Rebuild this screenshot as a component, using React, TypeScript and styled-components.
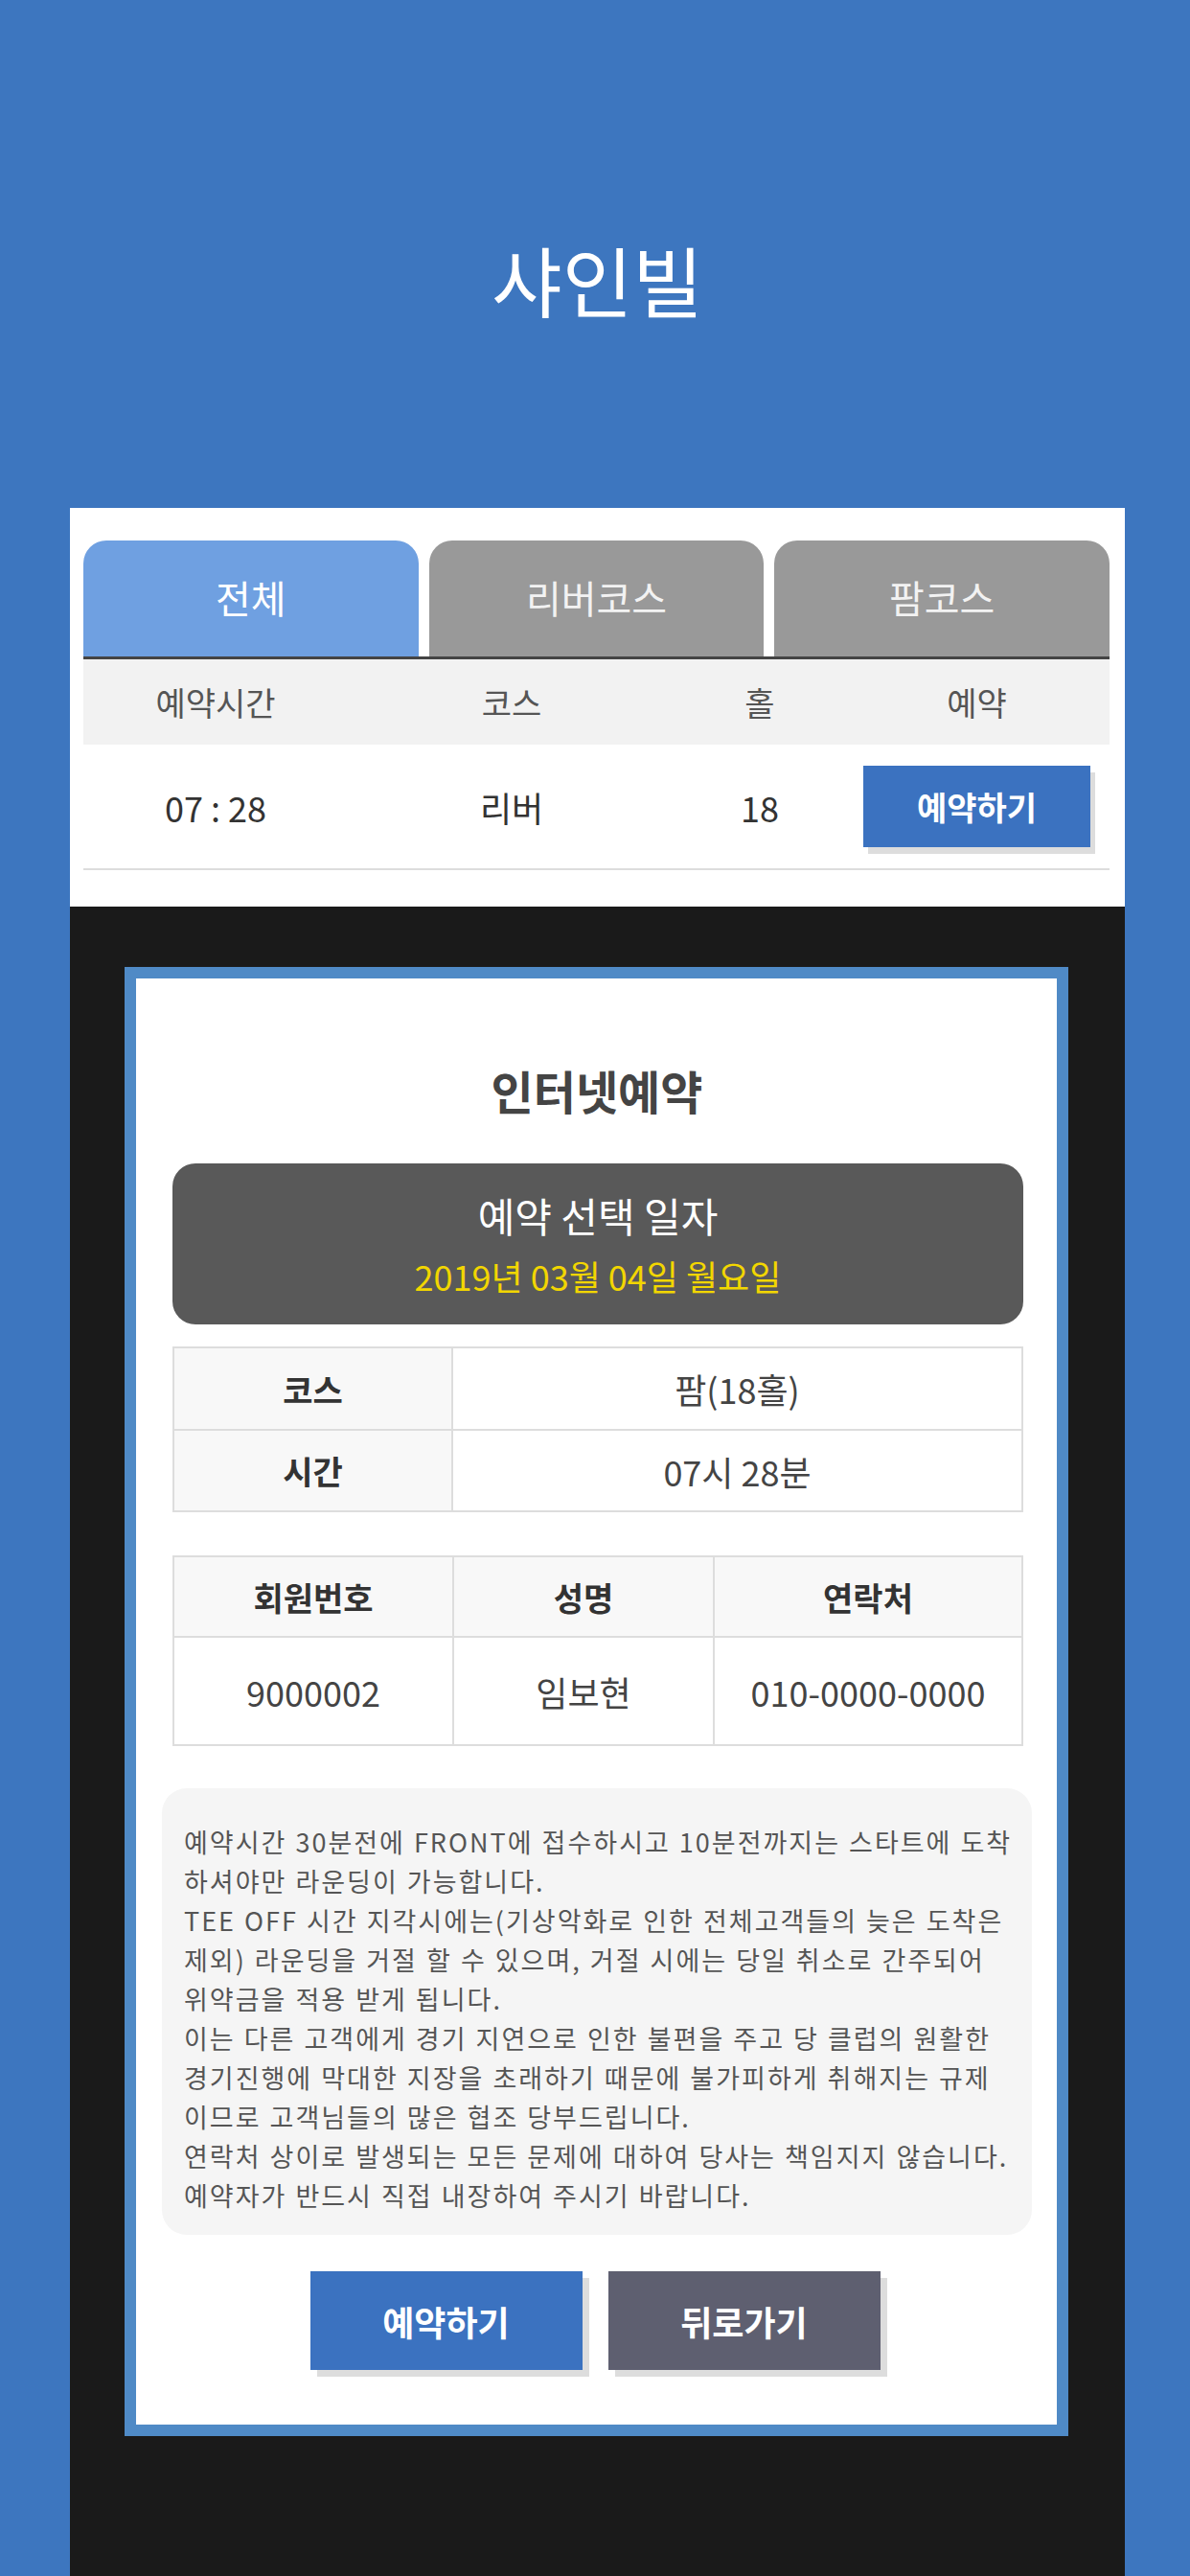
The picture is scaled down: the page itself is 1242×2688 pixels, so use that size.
import styled, { createGlobalStyle } from "styled-components";

const GlobalStyle = createGlobalStyle`
  html, body {
    margin: 0;
    padding: 0;
    background: #3d76bf;
  }
  body {
    font-family: "Noto Sans CJK KR", "Noto Sans", sans-serif;
  }
  * {
    box-sizing: border-box;
  }
`;

const Page = styled.div`
  min-height: 2688px;
  padding: 0 68px 0 73px;
  display: flex;
  flex-direction: column;
`;

const Header = styled.header`
  height: 530px;
  padding-top: 240px;
  text-align: center;
`;

const SiteTitle = styled.h1`
  margin: 0;
  color: #ffffff;
  font-size: 80px;
  font-weight: 400;
  line-height: 100px;
`;

const Panel = styled.section`
  background: #ffffff;
  padding: 34px 16px 38px 14px;
`;

const Tabs = styled.div`
  display: flex;
  gap: 11px;
  border-bottom: 3px solid #444444;
`;

const Tab = styled.div<{ $active?: boolean }>`
  flex: 1;
  height: 121px;
  border-radius: 24px 24px 0 0;
  background: ${(p) => (p.$active ? "#6fa0e1" : "#999999")};
  color: ${(p) => (p.$active ? "#ffffff" : "#f2f2f2")};
  font-size: 40px;
  display: flex;
  align-items: center;
  justify-content: center;
  padding-bottom: 4px;
`;

const Row = styled.div<{ $head?: boolean }>`
  display: grid;
  grid-template-columns: 276px 342px 176px 1fr;
  align-items: center;
  height: ${(p) => (p.$head ? "89px" : "131px")};
  background: ${(p) => (p.$head ? "#f2f2f2" : "#ffffff")};
  border-bottom: ${(p) => (p.$head ? "none" : "2px solid #dddddd")};
  color: ${(p) => (p.$head ? "#555555" : "#333333")};
  font-size: ${(p) => (p.$head ? "34px" : "36px")};
`;

const Cell = styled.div`
  text-align: center;
`;

const SmallButton = styled.button`
  width: 237px;
  height: 85px;
  margin: 0 auto;
  display: block;
  border: none;
  background: #3b72c0;
  color: #ffffff;
  font-family: inherit;
  font-size: 34px;
  font-weight: 700;
  box-shadow: 5px 7px 0 #dddddd;
`;

const Overlay = styled.div`
  flex: 1;
  background: #1a1a1a;
  padding: 63px 59px 148px 57px;
`;

const Modal = styled.div`
  border: 12px solid #4f8ac6;
  background: #ffffff;
  padding: 86px 26px 57px 27px;
`;

const ModalTitle = styled.h2`
  margin: 0 0 47px;
  text-align: center;
  color: #444444;
  font-size: 48px;
  font-weight: 700;
  line-height: 60px;
`;

const DateBox = styled.div`
  margin: 0 9px 0 11px;
  height: 168px;
  border-radius: 24px;
  background: #595959;
  padding-top: 26px;
  text-align: center;
`;

const DateLabel = styled.div`
  color: #ffffff;
  font-size: 42px;
  line-height: 56px;
`;

const DateValue = styled.div`
  margin-top: 11px;
  color: #f2d600;
  font-size: 36px;
  line-height: 48px;
`;

const InfoGrid = styled.div<{ $cols: string; $rows: string; $top: number }>`
  margin: ${(p) => p.$top}px 9px 0 11px;
  display: grid;
  grid-template-columns: ${(p) => p.$cols};
  grid-template-rows: ${(p) => p.$rows};
  border-top: 2px solid #dddddd;
  border-left: 2px solid #dddddd;
`;

const InfoCell = styled.div<{ $label?: boolean }>`
  display: flex;
  align-items: center;
  justify-content: center;
  border-right: 2px solid #dddddd;
  border-bottom: 2px solid #dddddd;
  background: ${(p) => (p.$label ? "#f8f8f8" : "#ffffff")};
  color: ${(p) => (p.$label ? "#333333" : "#444444")};
  font-size: ${(p) => (p.$label ? "34px" : "36px")};
  font-weight: ${(p) => (p.$label ? 700 : 400)};
`;

const Notice = styled.div`
  margin-top: 44px;
  height: 466px;
  border-radius: 26px;
  background: #f5f5f5;
  padding: 35px 12px 21px 23px;
  color: #555555;
  font-size: 27px;
  line-height: 41px;
  letter-spacing: 2px;
  word-spacing: 1px;
`;

const NoticeLine = styled.div`
  white-space: nowrap;
`;

const Actions = styled.div`
  margin-top: 38px;
  display: flex;
  justify-content: center;
  gap: 27px;
  padding-right: 4px;
`;

const ActionButton = styled.button<{ $tone: "primary" | "back" }>`
  width: 284px;
  height: 103px;
  border: none;
  background: ${(p) => (p.$tone === "primary" ? "#3b72c0" : "#5e5f70")};
  color: #ffffff;
  font-family: inherit;
  font-size: 36px;
  font-weight: 700;
  box-shadow: 7px 7px 0 #dddddd;
`;

const noticeLines = [
  "예약시간 30분전에 FRONT에 접수하시고 10분전까지는 스타트에 도착",
  "하셔야만 라운딩이 가능합니다.",
  "TEE OFF 시간 지각시에는(기상악화로 인한 전체고객들의 늦은 도착은",
  "제외) 라운딩을 거절 할 수 있으며, 거절 시에는 당일 취소로 간주되어",
  "위약금을 적용 받게 됩니다.",
  "이는 다른 고객에게 경기 지연으로 인한 불편을 주고 당 클럽의 원활한",
  "경기진행에 막대한 지장을 초래하기 때문에 불가피하게 취해지는 규제",
  "이므로 고객님들의 많은 협조 당부드립니다.",
  "연락처 상이로 발생되는 모든 문제에 대하여 당사는 책임지지 않습니다.",
  "예약자가 반드시 직접 내장하여 주시기 바랍니다.",
];

const App = () => {
  return (
    <>
      <GlobalStyle />
      <Page>
        <Header>
          <SiteTitle>샤인빌</SiteTitle>
        </Header>
        <Panel>
          <Tabs>
            <Tab $active>전체</Tab>
            <Tab>리버코스</Tab>
            <Tab>팜코스</Tab>
          </Tabs>
          <Row $head>
            <Cell>예약시간</Cell>
            <Cell>코스</Cell>
            <Cell>홀</Cell>
            <Cell>예약</Cell>
          </Row>
          <Row>
            <Cell>07 : 28</Cell>
            <Cell>리버</Cell>
            <Cell>18</Cell>
            <Cell>
              <SmallButton>예약하기</SmallButton>
            </Cell>
          </Row>
        </Panel>
        <Overlay>
          <Modal>
            <ModalTitle>인터넷예약</ModalTitle>
            <DateBox>
              <DateLabel>예약 선택 일자</DateLabel>
              <DateValue>2019년 03월 04일 월요일</DateValue>
            </DateBox>
            <InfoGrid $cols="291px 1fr" $rows="86px 85px" $top={23}>
              <InfoCell $label>코스</InfoCell>
              <InfoCell>팜(18홀)</InfoCell>
              <InfoCell $label>시간</InfoCell>
              <InfoCell>07시 28분</InfoCell>
            </InfoGrid>
            <InfoGrid $cols="292px 272px 1fr" $rows="84px 113px" $top={45}>
              <InfoCell $label>회원번호</InfoCell>
              <InfoCell $label>성명</InfoCell>
              <InfoCell $label>연락처</InfoCell>
              <InfoCell>9000002</InfoCell>
              <InfoCell>임보현</InfoCell>
              <InfoCell>010-0000-0000</InfoCell>
            </InfoGrid>
            <Notice>
              {noticeLines.map((line) => (
                <NoticeLine key={line}>{line}</NoticeLine>
              ))}
            </Notice>
            <Actions>
              <ActionButton $tone="primary">예약하기</ActionButton>
              <ActionButton $tone="back">뒤로가기</ActionButton>
            </Actions>
          </Modal>
        </Overlay>
      </Page>
    </>
  );
};

export default App;
